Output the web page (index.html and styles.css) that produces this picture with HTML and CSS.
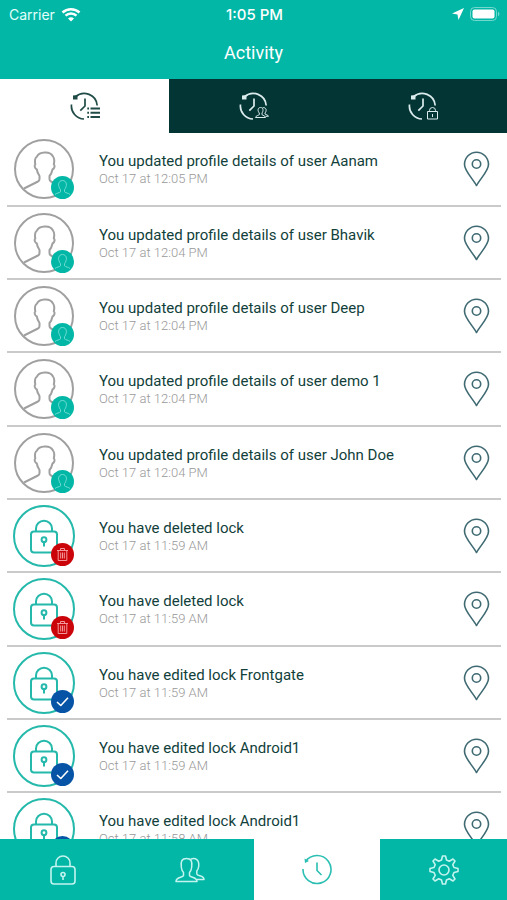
FILE: index.html
```html
<!DOCTYPE html>
<html lang="en">
<head>
<meta charset="utf-8">
<meta name="viewport" content="width=device-width, initial-scale=1">
<title>Activity</title>
<link rel="stylesheet" href="styles.css">
</head>
<body>
<svg class="sprite" aria-hidden="true">
  <symbol id="person" viewBox="0 0 62 62">
    <circle cx="31" cy="31" r="29"/>
    <path d="M11 50.500L25 43.500Q26.500 43 26.500 41V38C25 36 24.200 34 23.800 31.500C21.800 30.500 21 27.500 22.300 26.500C21.500 22.500 21.800 20 24 18.500C26 14 37 12.500 40 18.500C41.500 20.500 41.500 23.500 40.800 26.500C42.300 27.500 41.500 30.500 39.500 31.500C39 34 38.200 36 36.500 38V41Q36.500 43 38 43.500L51 50.500"/>
  </symbol>
  <symbol id="lock" viewBox="0 0 62 62">
    <circle cx="31" cy="31" r="30"/>
    <rect x="18" y="26.500" width="26" height="21" rx="3"/>
    <path d="M23 26.500V23.500a8 7.700 0 0 1 16 0V26.500"/>
    <circle cx="31" cy="34.700" r="2.400"/><path d="M31 37v4.500"/>
  </symbol>
  <symbol id="b-user" viewBox="0 0 23 23">
    <path d="M4 18.500C5.500 17 8.500 17 9.500 15.800V13.700C8.500 12.500 8.200 11.500 8 10.500C7.200 9.500 7.200 4.500 11.500 4.500S15.800 9.500 15 10.500C14.800 11.500 14.500 12.500 13.500 13.700V15.800C14.500 17 17.500 17 19 18.500"/>
  </symbol>
  <symbol id="b-trash" viewBox="0 0 23 23">
    <path d="M6 7.500H17M9.500 7.500V5.500H13.500V7.500M7.200 7.500V17.500H15.800V7.500M9.700 9.500V15.500M11.500 9.500V15.500M13.300 9.500V15.500"/>
  </symbol>
  <symbol id="b-check" viewBox="0 0 23 23"><path stroke-width="1.600" d="M6 12L9.800 15.500L17 7.800"/></symbol>
  <symbol id="pin" viewBox="0 0 27 36">
    <g stroke-width="1.600">
      <path d="M13.500 34.500C10 28 1.500 20 1.500 13.500a12 12.300 0 0 1 24 0C25.500 20 17 28 13.500 34.500Z"/>
      <circle cx="13.500" cy="13" r="4.200"/>
    </g>
  </symbol>
  <symbol id="history" viewBox="0 0 30 30">
    <path stroke-width="1.700" d="M5.500 5.800A13 13 0 0 1 27.200 14.500M1.500 13.500A13 13 0 0 0 14 28M15 7.500V15L10.300 19.700"/>
    <path class="solid" d="M3 4.500L7.500 4V8.500H3Z"/>
  </symbol>
  <symbol id="t-list" viewBox="0 0 30 30"><use href="#history"/>
    <path d="M17.300 17.500h1.700M20.500 17.500H30M17.300 21.700h1.700M20.500 21.700H30M17.300 26h1.700M20.500 26H30"/>
  </symbol>
  <symbol id="t-users" viewBox="0 0 30 30"><use href="#history"/>
    <path class="fine" d="M16.500 26.500C17 24.500 19.500 24.500 20.300 23.700V22C18.500 20 18.500 16.500 21.500 16.500S24.500 20 23 22V23.700C24 24.500 26 24.500 26.500 26.500ZM23.500 16.800C27.500 15.800 28 20 26 22V23C27 24 29 23.700 29.500 25.300H26.500"/>
  </symbol>
  <symbol id="t-lock" viewBox="0 0 30 30"><use href="#history"/>
    <path class="fine" d="M19.500 20.500H29.500V28H19.500ZM21.500 20.500V19.500a3 3 0 0 1 6 0V20.500M24.500 23V26"/>
  </symbol>
  <symbol id="n-lock" viewBox="0 0 32 32">
    <g stroke-width="1.600">
      <rect x="4" y="12.500" width="24" height="17.500" rx="3"/>
      <path d="M9 12.500V9a7 7 0 0 1 14 0V12.500M16 22.500V26"/><circle cx="16" cy="20.500" r="2"/>
    </g>
  </symbol>
  <symbol id="n-users" viewBox="0 0 32 32">
    <g stroke-width="1.500">
      <path d="M2 27.500C2 22.500 9 24 9.500 21.500V18.500C7.500 16.500 7.500 14.500 7.300 13C6.500 7 8 4.500 12.500 4.500S18.500 7 17.700 13C17.500 14.500 17.500 16.500 15.500 18.500V21.500C16 24 23 22.500 23 27.500Z"/>
      <path d="M16.500 5.200C21.500 3.500 25.500 5.500 24.700 12.500C24.500 14 24 15.500 22.800 17V20C23.500 22.500 30 21 30 25.500H23"/>
    </g>
  </symbol>
  <symbol id="n-clock" viewBox="0 0 32 32">
    <path stroke-width="1.600" d="M4.500 7.500A14 14 0 1 1 2 15M16 8.500V16.500L20.500 21"/>
    <path class="solid" d="M3.500 4.500L8 7L4 9Z"/>
  </symbol>
  <symbol id="n-gear" viewBox="0 0 32 32">
    <g stroke-width="1.600">
      <path d="M14.500 2h3l1 4 2.800 1.200L25 5l2 2-2.200 3.700L26 13.500l4 1v3l-4 1-1.200 2.800L27 25l-2 2-3.700-2.200L18.500 26l-1 4h-3l-1-4-2.800-1.200L7 27l-2-2 2.200-3.700L6 18.500l-4-1v-3l4-1 1.200-2.800L5 7l2-2 3.700 2.200L13.500 6Z"/>
      <circle cx="16" cy="16" r="5"/>
    </g>
  </symbol>
</svg>

<header class="top">
  <div class="status">
    <div class="status-left">
      <span>Carrier</span>
      <svg class="wifi" viewBox="0 0 20 15" aria-hidden="true"><path d="M1.500 5.500A12.500 12.500 0 0 1 18.500 5.500M4.500 8.700A8 8 0 0 1 15.500 8.700"/><path class="solid" d="M7 11.500A4.500 4.500 0 0 1 13 11.500L10 14.500Z"/></svg>
    </div>
    <span class="clock">1:05 PM</span>
    <div class="status-right">
      <svg class="arrow" viewBox="0 0 12 12" aria-hidden="true"><path d="M12 0L6.500 12L5.500 6.500L0 5.500Z"/></svg>
      <svg class="battery" viewBox="0 0 30 14" aria-hidden="true"><rect class="shell" x="0.500" y="0.500" width="26" height="13" rx="4"/><rect x="2.500" y="2.500" width="22" height="9" rx="2"/><path class="cap" d="M28 4.500Q31 7 28 9.500Z"/></svg>
    </div>
  </div>
  <h1>Activity</h1>
</header>

<div class="tabs" role="tablist">
  <button class="tab active" role="tab" aria-selected="true" aria-label="All activity"><svg><use href="#t-list"/></svg></button>
  <button class="tab" role="tab" aria-selected="false" aria-label="User activity"><svg><use href="#t-users"/></svg></button>
  <button class="tab" role="tab" aria-selected="false" aria-label="Lock activity"><svg><use href="#t-lock"/></svg></button>
</div>

<main>
  <ul class="list">
    <li><div class="avatar user"><svg><use href="#person"/></svg><svg class="badge"><use href="#b-user"/></svg></div><div class="text"><p class="title">You updated profile details of user Aanam</p><p class="time">Oct 17 at 12:05 PM</p></div><button class="pin" aria-label="Show location"><svg><use href="#pin"/></svg></button></li>
    <li><div class="avatar user"><svg><use href="#person"/></svg><svg class="badge"><use href="#b-user"/></svg></div><div class="text"><p class="title">You updated profile details of user Bhavik</p><p class="time">Oct 17 at 12:04 PM</p></div><button class="pin" aria-label="Show location"><svg><use href="#pin"/></svg></button></li>
    <li><div class="avatar user"><svg><use href="#person"/></svg><svg class="badge"><use href="#b-user"/></svg></div><div class="text"><p class="title">You updated profile details of user Deep</p><p class="time">Oct 17 at 12:04 PM</p></div><button class="pin" aria-label="Show location"><svg><use href="#pin"/></svg></button></li>
    <li><div class="avatar user"><svg><use href="#person"/></svg><svg class="badge"><use href="#b-user"/></svg></div><div class="text"><p class="title">You updated profile details of user demo 1</p><p class="time">Oct 17 at 12:04 PM</p></div><button class="pin" aria-label="Show location"><svg><use href="#pin"/></svg></button></li>
    <li><div class="avatar user"><svg><use href="#person"/></svg><svg class="badge"><use href="#b-user"/></svg></div><div class="text"><p class="title">You updated profile details of user John Doe</p><p class="time">Oct 17 at 12:04 PM</p></div><button class="pin" aria-label="Show location"><svg><use href="#pin"/></svg></button></li>
    <li><div class="avatar"><svg><use href="#lock"/></svg><svg class="badge deleted"><use href="#b-trash"/></svg></div><div class="text"><p class="title">You have deleted lock</p><p class="time">Oct 17 at 11:59 AM</p></div><button class="pin" aria-label="Show location"><svg><use href="#pin"/></svg></button></li>
    <li><div class="avatar"><svg><use href="#lock"/></svg><svg class="badge deleted"><use href="#b-trash"/></svg></div><div class="text"><p class="title">You have deleted lock</p><p class="time">Oct 17 at 11:59 AM</p></div><button class="pin" aria-label="Show location"><svg><use href="#pin"/></svg></button></li>
    <li><div class="avatar"><svg><use href="#lock"/></svg><svg class="badge edited"><use href="#b-check"/></svg></div><div class="text"><p class="title">You have edited lock Frontgate</p><p class="time">Oct 17 at 11:59 AM</p></div><button class="pin" aria-label="Show location"><svg><use href="#pin"/></svg></button></li>
    <li><div class="avatar"><svg><use href="#lock"/></svg><svg class="badge edited"><use href="#b-check"/></svg></div><div class="text"><p class="title">You have edited lock Android1</p><p class="time">Oct 17 at 11:59 AM</p></div><button class="pin" aria-label="Show location"><svg><use href="#pin"/></svg></button></li>
    <li><div class="avatar"><svg><use href="#lock"/></svg><svg class="badge edited"><use href="#b-check"/></svg></div><div class="text"><p class="title">You have edited lock Android1</p><p class="time">Oct 17 at 11:58 AM</p></div><button class="pin" aria-label="Show location"><svg><use href="#pin"/></svg></button></li>
  </ul>
</main>

<nav class="bottom" aria-label="Main">
  <a href="#locks" aria-label="Locks"><svg><use href="#n-lock"/></svg></a>
  <a href="#users" aria-label="Users"><svg><use href="#n-users"/></svg></a>
  <a href="#activity" class="active" aria-label="Activity" aria-current="page"><svg><use href="#n-clock"/></svg></a>
  <a href="#settings" aria-label="Settings"><svg><use href="#n-gear"/></svg></a>
</nav>
</body>
</html>
```

FILE: styles.css
```css
:root {
  --teal: #03b7a7;
  --dark: #033535;
}

* { box-sizing: border-box; }

body {
  margin: 0;
  height: 100vh;
  display: flex;
  flex-direction: column;
  background: #fff;
  font-family: Roboto, "Liberation Sans", sans-serif;
}

svg {
  display: block;
  fill: none;
  stroke: currentColor;
  stroke-linejoin: round;
}

.sprite {
  position: absolute;
  width: 0;
  height: 0;
}

.solid { fill: currentColor; stroke: none; }
.fine { stroke-width: 1; }

/* Header */
.top {
  flex: none;
  height: 79px;
  background: var(--teal);
  color: #fff;
}

.status {
  display: grid;
  grid-template-columns: 1fr auto 1fr;
  align-items: center;
  height: 28px;
  padding: 0 7px 0 9px;
  font-family: Inter, sans-serif;
  font-size: 14px;
}

.status-left, .status-right {
  display: flex;
  align-items: center;
  gap: 6px;
}

.status-left { color: #e2fffb; }
.status-right { justify-content: flex-end; }

.clock {
  font-size: 15px;
  font-weight: 500;
}

.wifi {
  width: 20px;
  height: 15px;
  color: #fff;
  stroke-width: 2.5;
}

.arrow {
  width: 12px;
  height: 12px;
  fill: #fff;
  stroke: none;
}

.battery {
  width: 30px;
  height: 14px;
  fill: #fff;
  stroke: none;
}

.shell {
  fill: none;
  stroke: #75d8ce;
}

.cap { fill: #75d8ce; }

h1 {
  margin: 0;
  font-size: 18px;
  font-weight: 400;
  line-height: 50px;
  text-align: center;
}

/* Filter tabs */
.tabs {
  flex: none;
  display: grid;
  grid-template-columns: repeat(3, 1fr);
  height: 54px;
}

.tab {
  display: grid;
  place-items: center;
  padding: 0;
  border: 0;
  background: var(--dark);
  color: #dcebec;
}

.tab.active {
  background: #fff;
  color: #204b47;
}

.tab svg {
  width: 30px;
  height: 30px;
  stroke-width: 2;
}

/* Activity list */
main {
  flex: 1;
  min-height: 0;
  overflow-y: auto;
  scrollbar-width: none;
}

.list {
  margin: 0;
  padding: 0 6px 0 7px;
  list-style: none;
}

.list li {
  display: flex;
  align-items: center;
  height: 73px;
  padding: 0 11px 0 6px;
  border-bottom: 2px solid #cacaca;
}

.list li:nth-child(3n + 1) { height: 74px; }

.avatar {
  position: relative;
  width: 62px;
  height: 62px;
  color: #24b9ab;
  stroke-width: 2;
}

.avatar svg {
  width: 62px;
  height: 62px;
}

.avatar.user { color: #a0a0a0; }

.avatar .badge {
  position: absolute;
  right: 1px;
  bottom: 1px;
  width: 23px;
  height: 23px;
  border-radius: 50%;
  background: var(--teal);
  color: #70dcd1;
  stroke-width: 1;
}

.avatar .deleted {
  background: #ca0409;
  color: #f29a9b;
}

.avatar .edited {
  background: #0753a6;
  color: #fff;
}

.text {
  flex: 1;
  padding-left: 24px;
}

.text p { margin: 0; }

.title {
  font-size: 15px;
  line-height: 20px;
  color: #123f3b;
}

.time {
  font-size: 13px;
  font-weight: 300;
  line-height: 16px;
  color: #999;
}

.pin {
  padding: 0;
  border: 0;
  background: none;
  color: #3f6a72;
}

.pin svg {
  width: 27px;
  height: 36px;
}

/* Bottom navigation */
.bottom {
  flex: none;
  display: grid;
  grid-template-columns: repeat(4, 1fr);
  height: 61px;
}

.bottom a {
  display: grid;
  place-items: center;
  background: var(--teal);
  color: #c4f4ef;
}

.bottom .active {
  background: #fff;
  color: #2abfb2;
}

.bottom svg {
  width: 32px;
  height: 32px;
}
```
